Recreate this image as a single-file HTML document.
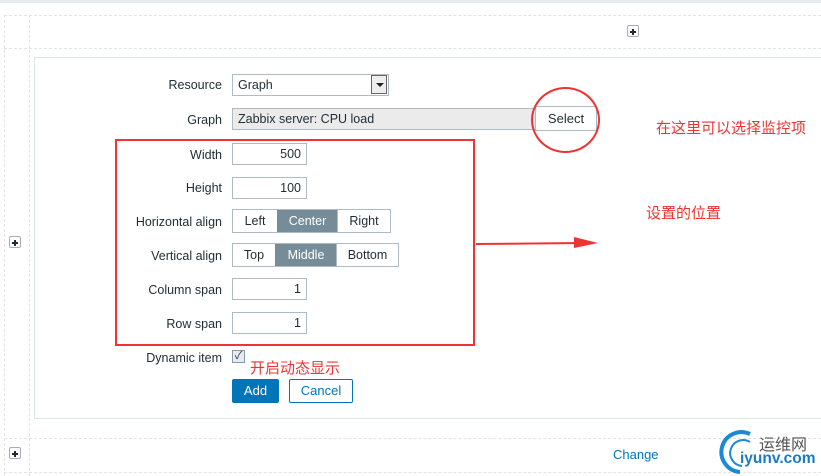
<!DOCTYPE html>
<html><head><meta charset="utf-8"><style>
body{margin:0;width:821px;height:476px;position:relative;overflow:hidden;background:#fff;font-family:"Liberation Sans","Noto Sans CJK SC",sans-serif;font-size:12.5px;color:#1f2c33}
.a{position:absolute}
.dh{position:absolute;height:0;border-top:1px dashed #e3e3e3}
.dv{position:absolute;width:0;border-left:1px dashed #e3e3e3}
.lbl{position:absolute;right:599px;text-align:right;white-space:nowrap}
.inp{position:absolute;height:22px;box-sizing:border-box;border:1px solid #acbbc6;background:#fff;line-height:20px;padding:0 5px}
.plus{position:absolute;width:12px;height:12px;border:1px solid #aab;border-radius:2px;background:#fff;box-sizing:border-box}
.plus:before{content:"";position:absolute;left:2px;top:4.5px;width:6px;height:2px;background:#1f2c33}
.plus:after{content:"";position:absolute;left:4px;top:2.5px;width:2px;height:6px;background:#1f2c33}
.seg{position:absolute;height:24px;display:flex;border:1px solid #acbbc6;box-sizing:border-box}
.seg span{line-height:22px;text-align:center;border-left:1px solid #acbbc6;box-sizing:border-box}
.seg span:first-child{border-left:none}
.seg .on{background:#768d99;color:#fff;border-color:#768d99}
.red{color:#ee3333;font-size:15px}
</style></head><body>
<div class="a" style="left:0;top:0;width:821px;height:3px;background:#e8eaec"></div>
<div class="dh" style="left:4px;top:15px;width:817px"></div>
<div class="dh" style="left:4px;top:48px;width:817px"></div>
<div class="dv" style="left:4px;top:15px;height:461px"></div>
<div class="dv" style="left:29px;top:15px;height:461px"></div>
<div class="dh" style="left:4px;top:438px;width:817px"></div>
<div class="dh" style="left:4px;top:472px;width:817px"></div>
<div class="a" style="left:34px;top:57px;width:790px;height:360px;border:1px solid #dfe4e7;background:#fff"></div>
<div class="plus" style="left:627px;top:25px"></div>
<div class="plus" style="left:9px;top:236px"></div>
<div class="plus" style="left:9px;top:447px"></div>

<div class="lbl" style="top:78px">Resource</div>
<div class="inp" style="left:232px;top:74px;width:157px">Graph</div>
<div class="a" style="left:371px;top:75px;width:16px;height:19px;border:1px solid #666;box-sizing:border-box;background:#eee"></div>
<div class="a" style="left:376px;top:83px;border-left:4px solid transparent;border-right:4px solid transparent;border-top:4px solid #222"></div>

<div class="lbl" style="top:113px">Graph</div>
<div class="inp" style="left:232px;top:108px;width:304px;background:#ebebeb">Zabbix server: CPU load</div>
<div class="inp" style="left:535px;top:106px;width:62px;height:25px;line-height:23px;text-align:center;padding:0;font-size:13px">Select</div>

<div class="lbl" style="top:148px">Width</div>
<div class="inp" style="left:232px;top:143px;width:75px;text-align:right">500</div>
<div class="lbl" style="top:181px">Height</div>
<div class="inp" style="left:232px;top:177px;width:75px;text-align:right">100</div>
<div class="lbl" style="top:215px">Horizontal align</div>
<div class="seg" style="left:232px;top:209px"><span style="width:44px">Left</span><span class="on" style="width:60px">Center</span><span style="width:53px">Right</span></div>
<div class="lbl" style="top:249px">Vertical align</div>
<div class="seg" style="left:232px;top:243px"><span style="width:42px">Top</span><span class="on" style="width:61px">Middle</span><span style="width:62px">Bottom</span></div>
<div class="lbl" style="top:283px">Column span</div>
<div class="inp" style="left:232px;top:278px;width:75px;text-align:right">1</div>
<div class="lbl" style="top:317px">Row span</div>
<div class="inp" style="left:232px;top:312px;width:75px;text-align:right">1</div>
<div class="lbl" style="top:351px">Dynamic item</div>
<div class="a" style="left:232px;top:350px;width:13px;height:13px;border:1px solid #8a9aa6;box-sizing:border-box;background:#e6ebf0;color:#335;font-size:11px;line-height:11px;text-align:center">✓</div>
<div class="a" style="left:232px;top:379px;width:47px;height:24px;background:#0275b8;color:#fff;text-align:center;line-height:24px;border-radius:2px;font-size:13px">Add</div>
<div class="a" style="left:289px;top:379px;width:64px;height:24px;border:1px solid #0275b8;box-sizing:border-box;color:#0275b8;text-align:center;line-height:22px;border-radius:2px;font-size:13px">Cancel</div>
<div class="a" style="left:613px;top:447px;color:#0275b8;font-size:13px">Change</div>

<div class="a" style="left:115px;top:139px;width:356px;height:203px;border:2px solid #ee3333"></div>
<div class="a" style="left:531px;top:87px;width:65px;height:62px;border:2px solid #ee3333;border-radius:50%"></div>
<svg class="a" style="left:474px;top:234px" width="126" height="20"><path d="M2 10 L108 9" stroke="#ee3333" stroke-width="2"/><path d="M100 3 L124 9 L100 14 Z" fill="#ee3333"/></svg>
<div class="a red" style="left:656px;top:117px">在这里可以选择监控项</div>
<div class="a red" style="left:646px;top:202px">设置的位置</div>
<div class="a red" style="left:250px;top:357px">开启动态显示</div>

<svg class="a" style="left:716px;top:428px" width="44" height="46"><path d="M34 6 A20 20 0 1 0 24 44" stroke="#1a8ad4" stroke-width="4" fill="none"/><path d="M34 14 A13 13 0 1 0 26 38" stroke="#1a8ad4" stroke-width="2" fill="none"/></svg>
<div class="a" style="left:759px;top:431px;color:#555;font-size:16px">运维网</div>
<div class="a" style="left:740px;top:450px;color:#1a7bc4;font-size:15.5px;font-weight:bold">iyunv.com</div>
</body></html>
